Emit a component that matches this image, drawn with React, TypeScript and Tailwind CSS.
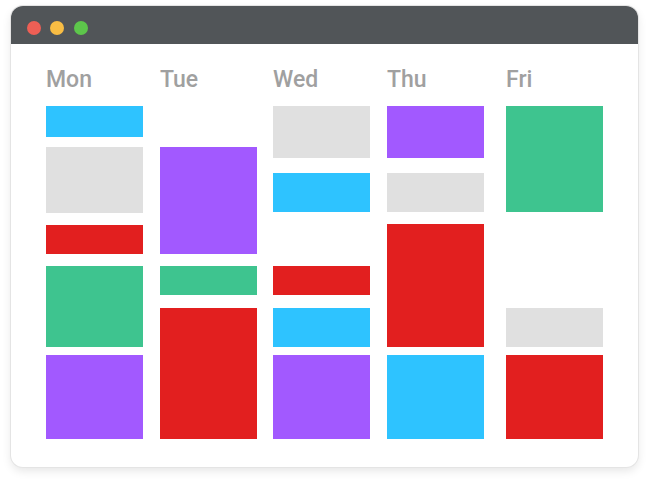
import React from "react";

const C = {
  cyan: "bg-[#2ec3ff]",
  gray: "bg-[#e0e0e0]",
  red: "bg-[#e21f1f]",
  green: "bg-[#3ec48f]",
  purple: "bg-[#a259ff]",
};

function Header({ children }: { children: React.ReactNode }) {
  return (
    <div className="h-[28px] text-[23px] leading-[28px] font-medium text-[#a0a0a0] font-['Roboto',sans-serif]">
      {children}
    </div>
  );
}

export default function App() {
  return (
    <div className="w-[650px] h-[485px] bg-white pt-[6px] pl-[11px]">
      <div className="w-[627px] h-[461px] rounded-[12px] bg-white overflow-hidden shadow-[0_0_0_1px_#e4e4e4,0_4px_10px_rgba(0,0,0,0.10)]">
        <div className="h-[38px] bg-[#515558] flex items-start pt-[15px] pl-[16px]">
          <div className="w-[14px] h-[14px] rounded-full bg-[#ee5f55]" />
          <div className="w-[14px] h-[14px] rounded-full bg-[#f8bd44] ml-[9px]" />
          <div className="w-[14px] h-[14px] rounded-full bg-[#5dc64b] ml-[10px]" />
        </div>
        <div className="flex pt-[22px] pl-[35px]">
          {/* Mon */}
          <div className="w-[97px] flex flex-col">
            <Header>Mon</Header>
            <div className="pt-[12px] flex flex-col">
              <div className={`h-[31px] ${C.cyan}`} />
              <div className={`h-[66px] mt-[10px] ${C.gray}`} />
              <div className={`h-[29px] mt-[12px] ${C.red}`} />
              <div className={`h-[81px] mt-[12px] ${C.green}`} />
              <div className={`h-[84px] mt-[8px] ${C.purple}`} />
            </div>
          </div>
          {/* Tue */}
          <div className="w-[97px] ml-[17px] flex flex-col">
            <Header>Tue</Header>
            <div className="pt-[12px] flex flex-col">
              <div className={`h-[107px] mt-[41px] ${C.purple}`} />
              <div className={`h-[29px] mt-[12px] ${C.green}`} />
              <div className={`h-[131px] mt-[13px] ${C.red}`} />
            </div>
          </div>
          {/* Wed */}
          <div className="w-[97px] ml-[16px] flex flex-col">
            <Header>Wed</Header>
            <div className="pt-[12px] flex flex-col">
              <div className={`h-[52px] ${C.gray}`} />
              <div className={`h-[39px] mt-[15px] ${C.cyan}`} />
              <div className={`h-[29px] mt-[54px] ${C.red}`} />
              <div className={`h-[39px] mt-[13px] ${C.cyan}`} />
              <div className={`h-[84px] mt-[8px] ${C.purple}`} />
            </div>
          </div>
          {/* Thu */}
          <div className="w-[97px] ml-[17px] flex flex-col">
            <Header>Thu</Header>
            <div className="pt-[12px] flex flex-col">
              <div className={`h-[52px] ${C.purple}`} />
              <div className={`h-[39px] mt-[15px] ${C.gray}`} />
              <div className={`h-[123px] mt-[12px] ${C.red}`} />
              <div className={`h-[84px] mt-[8px] ${C.cyan}`} />
            </div>
          </div>
          {/* Fri */}
          <div className="w-[97px] ml-[22px] flex flex-col">
            <Header>Fri</Header>
            <div className="pt-[12px] flex flex-col">
              <div className={`h-[106px] ${C.green}`} />
              <div className={`h-[39px] mt-[96px] ${C.gray}`} />
              <div className={`h-[84px] mt-[8px] ${C.red}`} />
            </div>
          </div>
        </div>
      </div>
    </div>
  );
}
